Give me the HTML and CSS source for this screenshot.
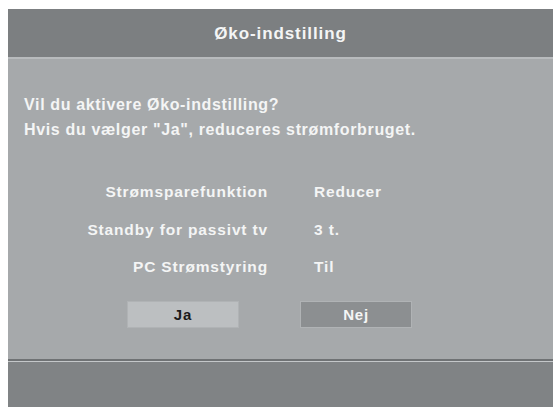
FILE: index.html
```html
<!DOCTYPE html>
<html lang="da">
<head>
    <meta charset="UTF-8">
    <title>Øko-indstilling</title>
    <link rel="stylesheet" href="styles.css">
</head>
<body>
    <div class="dialog">
        <div class="dialog-header">Øko-indstilling</div>

        <div class="dialog-body">
            <p class="question">
                Vil du aktivere Øko-indstilling?<br>
                Hvis du vælger "Ja", reduceres strømforbruget.
            </p>

            <div class="settings">
                <span class="label">Strømsparefunktion</span>
                <span class="value">Reducer</span>
                <span class="label">Standby for passivt tv</span>
                <span class="value">3 t.</span>
                <span class="label">PC Strømstyring</span>
                <span class="value">Til</span>
            </div>

            <div class="buttons">
                <button class="btn btn-selected">Ja</button>
                <button class="btn">Nej</button>
            </div>
        </div>

        <div class="dialog-footer"></div>
    </div>
</body>
</html>
```

FILE: styles.css
```css
html, body {
    margin: 0;
    padding: 0;
    background: #ffffff;
}
body {
    font-family: "Liberation Sans", Arial, sans-serif;
    font-weight: bold;
    color: #f4f5f5;
}
.dialog {
    margin: 9px 3px 0 8px;
    height: 398px;
    display: flex;
    flex-direction: column;
    background: #a6a9ab;
}
.dialog-header {
    height: 48px;
    line-height: 50px;
    text-align: center;
    font-size: 17px;
    letter-spacing: 0.9px;
    background: #7c7f81;
    border-bottom: 2px solid #b8bbbd;
}
.dialog-body {
    flex: 1;
    padding: 33px 16px 0;
    border-bottom: 2px solid #6f7274;
}
.question {
    margin: 0;
    font-size: 16px;
    letter-spacing: 0.65px;
    line-height: 25px;
}
.settings {
    display: grid;
    grid-template-columns: 244px auto;
    column-gap: 46px;
    margin-top: 31px;
    font-size: 15.5px;
    letter-spacing: 0.85px;
    line-height: 37.5px;
}
.label {
    text-align: right;
}
.buttons {
    display: flex;
    gap: 61px;
    margin: 15px 0 0 103px;
}
.btn {
    width: 112px;
    height: 27px;
    padding: 0;
    border: 1px solid #b0b3b5;
    font-family: inherit;
    font-weight: bold;
    font-size: 15px;
    letter-spacing: 0.8px;
    color: #f4f5f5;
    background: #8c8f91;
}
.btn-selected {
    color: #1c1c1c;
    background: #bcbfc1;
}
.dialog-footer {
    height: 45px;
    background: #808385;
    border-top: 1px solid #c4c7c9;
}
```
